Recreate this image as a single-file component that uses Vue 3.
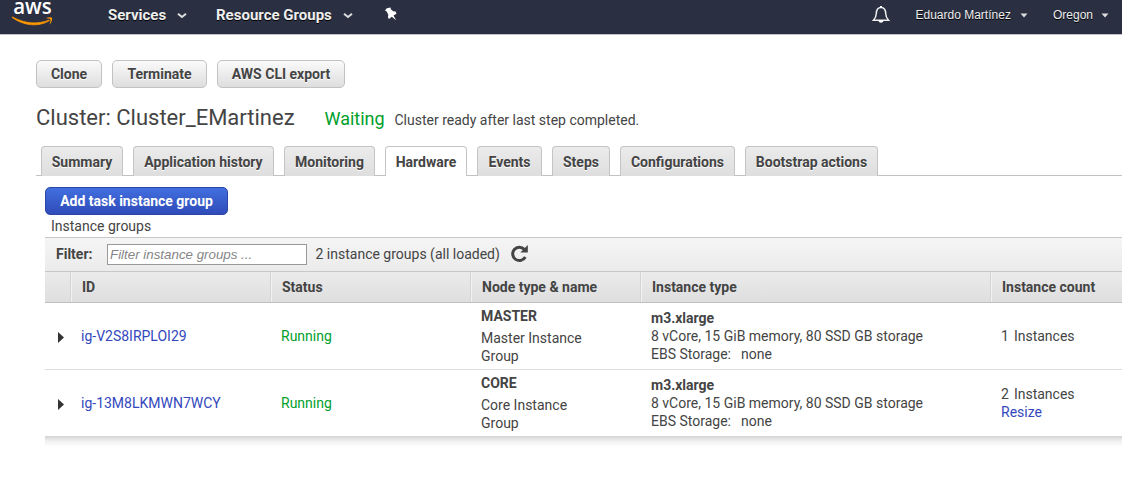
<script setup>
import { ref } from 'vue'

const actions = [
  { label: 'Clone', key: 'clone' },
  { label: 'Terminate', key: 'terminate' },
  { label: 'AWS CLI export', key: 'export' },
]
const tabs = [
  { label: 'Summary', key: 'summary' },
  { label: 'Application history', key: 'history' },
  { label: 'Monitoring', key: 'monitoring' },
  { label: 'Hardware', key: 'hardware' },
  { label: 'Events', key: 'events' },
  { label: 'Steps', key: 'steps' },
  { label: 'Configurations', key: 'configurations' },
  { label: 'Bootstrap actions', key: 'bootstrap' },
]
const activeTab = ref('hardware')
const columns = ['', 'ID', 'Status', 'Node type & name', 'Instance type', 'Instance count']
const groups = [
  { id: 'ig-V2S8IRPLOI29', type: 'MASTER', name: 'Master Instance Group', count: 1, resizable: false },
  { id: 'ig-13M8LKMWN7WCY', type: 'CORE', name: 'Core Instance Group', count: 2, resizable: true },
]
</script>

<template>
  <div class="page">
    <header class="nav">
      <svg class="logo" width="42" height="28" viewBox="0 0 42 28">
        <text x="1.200" y="14" textLength="38.500" lengthAdjust="spacingAndGlyphs" class="logo-text">aws</text>
        <path d="M0 17.300C11 25.500 26 27.500 37.500 20.600L36.800 20.200C26 24.500 13 24 .4 16.900Z" fill="#f90" stroke="#f90" stroke-width=".8" />
        <path d="M33.500 18.300c2.300-1.300 5.400-1.400 6.600-.6c.3 2.400-.8 5.300-2.800 7c.8-2 1.500-4.300 1.100-5.300c-1.300-.9-3.100-1-4.900-1.100z" fill="#f90" />
      </svg>
      <a class="menu services">Services
        <svg width="10" height="6" viewBox="0 0 10 6"><path d="M1 .8l4 3.200L9 .8" /></svg>
      </a>
      <a class="menu resources">Resource Groups
        <svg width="10" height="6" viewBox="0 0 10 6"><path d="M1 .8l4 3.200L9 .8" /></svg>
      </a>
      <svg class="pin" width="14" height="15" viewBox="0 0 14 15">
        <path d="M2.800 1.200L6.600.5L6.800 2.200L9.200 4.300L11.600 4.500L12.500 6.700L9.500 8.500L12.200 13.300L7.800 9.800L5 12L3.900 10.200L4.300 7.700L2.700 4.600L1 3.500Z" fill="#fff" />
      </svg>
      <svg class="bell" width="18" height="20" viewBox="0 0 18 20">
        <path d="M9 2.500C5.500 2.500 4.400 5.500 4.300 8.500C4.200 11.500 3.500 13.200 1.500 15.200H16.500C14.500 13.200 13.800 11.500 13.700 8.500C13.600 5.500 12.500 2.500 9 2.500Z" fill="none" stroke="#eee" stroke-width="1.500" />
        <path d="M8 1h2v2H8zM6.500 15.500h5c-.3 3-4.700 3-5 0z" fill="#fff" />
      </svg>
      <a class="account user">Eduardo Martínez
        <svg width="8" height="5" viewBox="0 0 8 5"><path d="M.5.5h7L4 4.500z" /></svg>
      </a>
      <a class="account region">Oregon
        <svg width="8" height="5" viewBox="0 0 8 5"><path d="M.5.5h7L4 4.500z" /></svg>
      </a>
    </header>

    <main>
      <div class="actions">
        <button v-for="a in actions" :key="a.key" class="btn" :class="a.key">{{ a.label }}</button>
      </div>

      <div class="heading">
        <h1>Cluster: Cluster_EMartinez</h1>
        <span class="state">Waiting</span>
        <span class="detail">Cluster ready after last step completed.</span>
      </div>

      <nav class="tabs">
        <a v-for="t in tabs" :key="t.key" class="tab" :class="[t.key, { active: t.key === activeTab }]" @click="activeTab = t.key">{{ t.label }}</a>
      </nav>

      <section class="panel">
        <button class="btn primary">Add task instance group</button>
        <div class="caption">Instance groups</div>
        <div class="table">
          <div class="filter">
            <label>Filter:</label>
            <input type="text" placeholder="Filter instance groups ..." />
            <span class="loaded">2 instance groups (all loaded)</span>
            <svg width="19" height="19" viewBox="0 0 19 19">
              <path d="M14.300 5.300A6.700 6.700 0 1 0 15.300 13" fill="none" stroke="#444" stroke-width="3" />
              <path d="M17.800 1v7.500h-7.500z" fill="#444" />
            </svg>
          </div>
          <div class="grid head">
            <div v-for="c in columns" :key="c" class="th">{{ c }}</div>
          </div>
          <div v-for="g in groups" :key="g.id" class="grid row">
            <div class="cell toggle"><svg width="6" height="11" viewBox="0 0 6 11"><path d="M0 0l6 5.500l-6 5.500z" fill="#333" /></svg></div>
            <div class="cell"><a class="link">{{ g.id }}</a></div>
            <div class="cell running">Running</div>
            <div class="cell node"><b>{{ g.type }}</b><span>{{ g.name }}</span></div>
            <div class="cell spec">
              <b>m3.xlarge</b>
              <span>8 vCore, 15 GiB memory, 80 SSD GB storage</span>
              <span class="ebs"><span>EBS Storage:</span><span>none</span></span>
            </div>
            <div class="cell count">
              <span class="amount"><span>{{ g.count }}</span><span>Instances</span></span>
              <a v-if="g.resizable" class="link">Resize</a>
            </div>
          </div>
        </div>
        <div class="shadow"></div>
      </section>
    </main>
  </div>
</template>

<style>
body { margin: 0; background: #fff; overflow: hidden; }
</style>

<style scoped>
.page { width: 1122px; height: 493px; overflow: hidden; box-sizing: border-box; background: #fff; color: #444; font: 14px/18px Roboto, "Noto Sans", sans-serif; }
.nav { display: flex; align-items: center; height: 34px; padding: 0 13px 0 12px; box-sizing: border-box; background: #2a3042; box-shadow: 0 1px 0 #c0c1c8; color: #eee; }
.logo { flex: none; align-self: flex-start; overflow: visible; }
.logo-text { font: 600 21.500px "Open Sans", sans-serif; fill: #fff; }
.menu { display: flex; align-items: center; justify-content: space-between; box-sizing: border-box; font-weight: 700; font-size: 15px; text-shadow: 0 1px 0 #000; white-space: nowrap; padding-bottom: 4px; }
.menu svg { margin-top: 1px; }
.menu path { fill: none; stroke: #ddd; stroke-width: 2; }
.services { width: 79px; margin-left: 54px; }
.resources { width: 137px; margin-left: 29px; }
.pin { margin: -5px 0 0 31px; }
.bell { margin: -5px 0 0 auto; }
.account { display: flex; align-items: center; justify-content: space-between; font: 12px/16px "Liberation Sans", Arial, sans-serif; text-shadow: 0 1px 0 #000; padding-bottom: 4px; white-space: nowrap; }
.account svg { margin-top: 0; fill: #ddd; }
.user { width: 112px; margin-left: 25.500px; }
.region { width: 56px; margin-left: 25.500px; }

main { padding-top: 26px; }
.actions { display: flex; gap: 10px; padding-left: 36px; }
.btn { height: 28px; box-sizing: border-box; padding: 0; border: 1px solid #c2c2c2; border-radius: 5px; background: linear-gradient(#fafafa, #dedede); color: #444; font: 700 14px/26px Roboto, "Noto Sans", sans-serif; text-shadow: 0 1px 0 #fff; text-align: center; white-space: nowrap; }
.clone { width: 66px; }
.terminate { width: 95px; }
.export { width: 128px; }
.heading { display: flex; align-items: baseline; height: 58px; padding: 15px 0 0 36px; box-sizing: border-box; line-height: 30px; white-space: nowrap; }
h1 { width: 288.500px; margin: 0; font-size: 22px; font-weight: 400; }
.state { width: 70px; font-size: 18px; color: #00a02c; }
.tabs { display: flex; align-items: flex-end; gap: 10px; margin-left: 36px; padding-left: 5px; height: 30px; box-sizing: border-box; box-shadow: inset 0 -1px 0 #c2c2c2; }
.tab { height: 30px; box-sizing: border-box; border: 1px solid #c4c4c4; border-bottom-width: 0; border-radius: 4px 4px 0 0; background: linear-gradient(#ebebeb, #dedede); font-weight: 700; line-height: 30px; text-align: center; text-shadow: 0 1px 0 #fff; white-space: nowrap; }
.tab.active { background: #fff; }
.summary, .hardware { width: 82px; }
.history { width: 141px; }
.monitoring { width: 91px; }
.events { width: 65px; }
.steps { width: 58px; }
.configurations { width: 115px; }
.bootstrap { width: 133px; }

.panel { margin-left: 45px; padding-top: 11px; }
.primary { display: block; width: 183px; border-color: #2b46a5; background: linear-gradient(#426fdf, #2f4bb9); color: #fff; text-shadow: none; }
.caption { height: 22px; padding-left: 6px; line-height: 22px; }
.filter { display: flex; align-items: center; height: 35px; box-sizing: border-box; border-top: 1px solid #c8c8c8; border-bottom: 1px solid #c8c8c8; background: linear-gradient(#f5f5f5, #ebebeb); }
.filter label { width: 51px; padding: 0 0 2px 11px; font-weight: 700; }
.filter input { width: 200px; height: 21px; box-sizing: border-box; padding: 0 2px; border: 1px solid #999; background: #fff; font: italic 13.330px "Liberation Sans", Arial, sans-serif; }
.filter input::placeholder { color: #858585; }
.loaded { width: 194px; margin-left: 8.500px; padding-bottom: 2px; white-space: nowrap; }
.filter svg { margin-bottom: 2px; }
.grid { display: grid; grid-template-columns: 26px 200px 200px 170px 350px 131px; }
.head { height: 31px; box-sizing: border-box; border-bottom: 1px solid #c0c0c0; background: linear-gradient(#ebebeb, #dedede); font-weight: 700; }
.th { padding-left: 11px; line-height: 30px; border-right: 1px solid #d4d4d4; box-shadow: 1px 0 0 #f2f2f2; }
.th:last-child { border: 0; }
.row { height: 67px; box-sizing: border-box; border-bottom: 1px solid #ddd; }
.row:last-child { height: 66px; border: 0; }
.cell { display: flex; flex-direction: column; justify-content: center; height: 66px; padding-left: 10px; box-sizing: border-box; }
.toggle { padding: 3px 0 0 13px; }
.link { color: #3348bd; }
.running { color: #00a02c; }
.node { width: 130px; padding-bottom: 1px; }
.node b { line-height: 19px; margin-bottom: 3px; }
.spec { white-space: nowrap; }
.ebs { display: flex; gap: 10px; }
.amount { display: flex; gap: 5px; }
.shadow { height: 11px; background: linear-gradient(#d4d4d4, #f2f2f2 50%, #fff); }
</style>
